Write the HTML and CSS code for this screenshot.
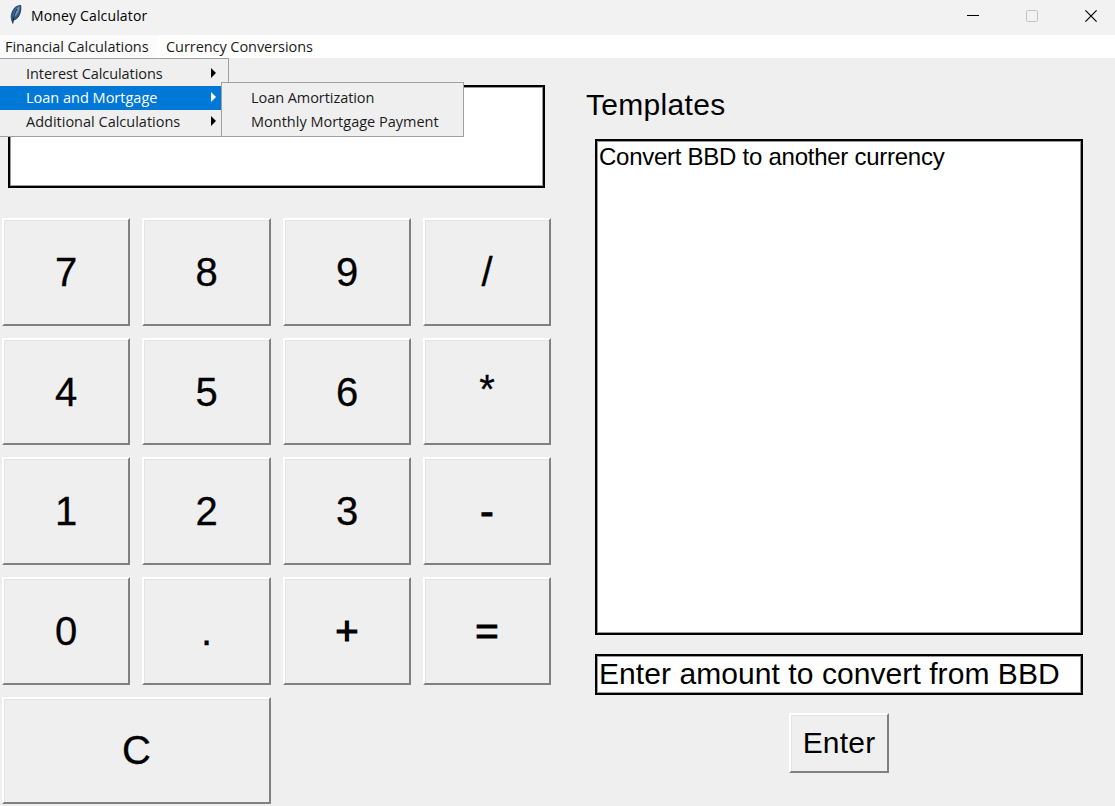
FILE: index.html
```html
<!DOCTYPE html>
<html lang="en">
<head>
<meta charset="utf-8">
<title>Money Calculator</title>
<link rel="stylesheet" href="styles.css">
</head>
<body>
<div class="window">
  <header class="titlebar">
    <svg class="feather" width="14" height="22" viewBox="0 0 14 22">
      <path d="M2.6 17.600C1 13 1.500 8 5.500 3.500C7.500 1.300 10 .6 11.600 1C12.400 5 11.500 10 8.800 13.500C7 15.700 5 15.500 4.300 16.500L3.800 19.500Z" fill="#33567f"/>
      <path d="M4 14C4 9 6.500 4.500 10.500 2C11 6 9 10.500 5.500 13Z" fill="#6290bf"/>
      <path d="M11.600 1C12.400 5 11.500 10 8.800 13.500C7 15.700 5 15.500 4.300 16.500" fill="none" stroke="#26384f"/>
      <path d="M8 5C5.500 8.500 4.500 13 3.800 19.500" fill="none" stroke="#1b2738" stroke-width="1"/>
    </svg>
    <span class="title">Money Calculator</span>
    <div class="controls">
      <svg width="12" height="12" viewBox="0 0 12 12"><path d="M0 5.500H12" stroke="#000"/></svg>
      <svg width="12" height="12" viewBox="0 0 12 12"><rect x=".5" y=".5" width="11" height="11" rx="1" fill="none" stroke="#c3c3c3"/></svg>
      <svg width="12" height="12" viewBox="0 0 12 12"><path d="M.4 .4L11.600 11.600M11.600 .4L.4 11.600" stroke="#000" stroke-width="1.200"/></svg>
    </div>
  </header>
  <nav class="menubar">
    <div class="menu-head open"><span class="snug">Financial Calculations</span>
      <div class="menu">
        <div class="item"><span class="snug">Interest Calculations</span><i class="arrow"></i></div>
        <div class="item selected"><span>Loan and Mortgage</span><i class="arrow"></i></div>
        <div class="item"><span>Additional Calculations</span><i class="arrow"></i></div>
      </div>
      <div class="menu submenu">
        <div class="item"><span class="snug">Loan Amortization</span></div>
        <div class="item"><span>Monthly Mortgage Payment</span></div>
      </div>
    </div>
    <div class="menu-head"><span class="snug">Currency Conversions</span></div>
  </nav>
  <main class="content">
    <section class="calculator">
      <div class="display field"></div>
      <div class="keypad">
        <button class="key">7</button><button class="key">8</button><button class="key">9</button><button class="key">/</button>
        <button class="key">4</button><button class="key">5</button><button class="key">6</button><button class="key raised">*</button>
        <button class="key">1</button><button class="key">2</button><button class="key">3</button><button class="key bold">-</button>
        <button class="key">0</button><button class="key">.</button><button class="key bold">+</button><button class="key bold">=</button>
        <button class="key wide">C</button>
      </div>
    </section>
    <section class="templates">
      <h1 class="heading">Templates</h1>
      <div class="list field">Convert BBD to another currency</div>
      <div class="entry field">Enter amount to convert from BBD</div>
      <button class="key enter">Enter</button>
    </section>
  </main>
</div>
</body>
</html>
```
FILE: styles.css
```css
* { box-sizing: border-box; }
body { margin: 0; font-family: "Liberation Sans", Arial, sans-serif; color: #000; }
.window { width: 1115px; height: 806px; overflow: hidden; background: #efefef; display: flex; flex-direction: column; }

.titlebar { height: 35px; flex: none; background: #f2f2f2; display: flex; align-items: flex-start; padding: 4px 18px 0 9px; }
.title { font: 14px/22px "Open Sans", sans-serif; margin: 1px 0 0 8px; letter-spacing: .15px; }
.controls { margin-left: auto; padding: 6px 0 0; display: grid; grid-template-columns: 12px 12px 12px; gap: 47px; }
.controls svg { display: block; }

.menubar { height: 23px; flex: none; background: #fff; display: flex; position: relative; font: 14.500px/24px "Open Sans", sans-serif; color: #1b1b1b; white-space: nowrap; }
.menu-head { width: 157px; padding-left: 5px; }
.menu-head + .menu-head { padding-left: 9px; }
.snug { letter-spacing: -.06px; }
.open { background: #fcfcfc; }
.menu { position: absolute; left: -1px; top: 23px; width: 230px; height: 79px; padding: 3px 0; background: #efefef; border: 1px solid #a0a0a0; z-index: 2; }
.submenu { left: 221px; top: 47px; width: 243px; height: 55px; z-index: 3; }
.item { height: 24px; line-height: 24px; padding: 0 12px 0 26px; display: flex; align-items: center; justify-content: space-between; }
.submenu .item { padding-left: 29px; }
.selected { background: #0078d7; color: #fff; }
.arrow { width: 0; height: 0; margin-bottom: 2px; border: 5px solid transparent; border-left-color: #000; border-right-width: 0; }
.selected .arrow { border-left-color: #fff; }

.content { flex: 1; display: flex; }
.calculator { width: 585px; padding: 27px 0 0 2px; }
.field { background: #fff; border: 2px solid #000; box-shadow: inset 0 0 0 1px #999; }
.display { width: 537px; height: 103px; margin: 0 0 30px 6px; }
.keypad { display: grid; grid-template-columns: 128px 129px 128px 128px; grid-template-rows: 108px 107px 108px 108px 107px; gap: 12px; }
.key { margin: 0; padding: 0; font: 40px/1 "Liberation Sans", Arial, sans-serif; color: #000; background: #efefef; border: 2px solid; border-color: #fff #808080 #808080 #fff; box-shadow: inset 1px 1px #e3e3e3; -webkit-text-stroke: .3px #000; }
.bold { -webkit-text-stroke-width: 1.200px; }
.raised { padding-bottom: 6px; }
.wide { grid-column: span 2; padding-bottom: 2px; }

.templates { width: 498px; display: flex; flex-direction: column; padding: 30px 0 0 10px; }
.heading { margin: 0 0 0 -9px; height: 51px; font-size: 30px; font-weight: 400; line-height: 34px; letter-spacing: .3px; }
.list { height: 496px; padding: 2px; font-size: 24px; line-height: 28px; letter-spacing: -.26px; white-space: nowrap; }
.entry { height: 41px; margin-top: 19px; padding-left: 2px; font-size: 30px; line-height: 35px; letter-spacing: .07px; white-space: nowrap; }
.enter { align-self: center; width: 100px; height: 60px; margin-top: 18px; padding-bottom: 1px; font-size: 30px; letter-spacing: .2px; -webkit-text-stroke-width: 0; }
```
